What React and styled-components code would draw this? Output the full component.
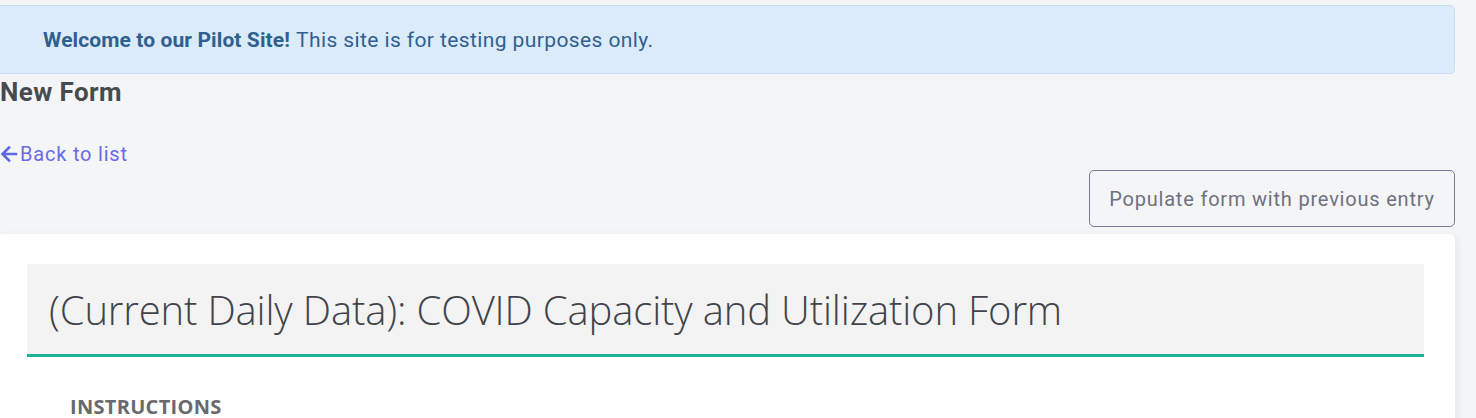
import React from 'react';
import styled, { createGlobalStyle } from 'styled-components';

const GlobalStyle = createGlobalStyle`
    html, body {
        margin: 0;
        padding: 0;
        background: #f4f5f7;
        font-family: Roboto, "Liberation Sans", sans-serif;
        overflow: hidden;
    }
`;

const Page = styled.div`
    width: 1455px;
    padding-top: 5px;
`;

const Banner = styled.div`
    height: 67px;
    display: flex;
    align-items: center;
    padding-left: 43px;
    background: #dbebfa;
    border: 1px solid #c6def6;
    border-left: none;
    border-radius: 0 5px 5px 0;
    color: #30608f;
    font-size: 21px;
    letter-spacing: 0.4px;
    strong {
        font-weight: 700;
        margin-right: 6px;
        letter-spacing: 0.1px;
    }
`;

const Title = styled.h2`
    margin: 0;
    height: 36px;
    line-height: 36px;
    font-size: 26px;
    font-weight: 700;
    letter-spacing: 0.4px;
    color: #484a4e;
`;

const BackLink = styled.a`
    display: flex;
    align-items: center;
    gap: 2px;
    margin-top: 32px;
    height: 24px;
    font-size: 20px;
    letter-spacing: 0.8px;
    color: #6a6be6;
    text-decoration: none;
`;

const Toolbar = styled.div`
    display: flex;
    justify-content: flex-end;
    margin-top: 4px;
`;

const OutlineButton = styled.button`
    height: 57px;
    width: 366px;
    border: 1px solid #7a7b98;
    border-radius: 5px;
    background: transparent;
    color: #6f7180;
    font-family: Roboto, "Liberation Sans", sans-serif;
    font-size: 20px;
    letter-spacing: 0.8px;
    padding: 0;
`;

const Card = styled.div`
    margin-top: 7px;
    background: #fff;
    border-radius: 0 6px 6px 0;
    box-shadow: 2px 2px 8px rgba(0, 0, 0, 0.06);
    padding: 30px 31px 0 27px;
    height: 200px;
`;

const FormHeader = styled.div`
    height: 90px;
    background: #f3f3f3;
    border-bottom: 3px solid #1ab394;
    display: flex;
    align-items: center;
    padding-left: 22px;
`;

const FormTitle = styled.h1`
    margin: 0;
    font-family: "Open Sans", sans-serif;
    font-weight: 300;
    font-size: 40px;
    color: #41444a;
    letter-spacing: -0.15px;
`;

const SectionLabel = styled.div`
    margin-top: 36px;
    padding-left: 43px;
    font-family: "Open Sans", sans-serif;
    font-weight: 700;
    font-size: 20px;
    color: #686a6d;
    letter-spacing: 0.3px;
`;

const ArrowIcon = () => (
    <svg width="18" height="18" viewBox="0 0 18 18" fill="none">
        <path d="M16 9H3M9 2.5L2.5 9L9 15.5" stroke="#5e67e6" strokeWidth="2.6" strokeLinecap="square" />
    </svg>
);

export default function App() {
    return (
        <Page>
            <GlobalStyle />
            <Banner>
                <strong>Welcome to our Pilot Site!</strong> This site is for testing purposes only.
            </Banner>
            <Title>New Form</Title>
            <BackLink href="#">
                <ArrowIcon />
                Back to list
            </BackLink>
            <Toolbar>
                <OutlineButton>Populate form with previous entry</OutlineButton>
            </Toolbar>
            <Card>
                <FormHeader>
                    <FormTitle>(Current Daily Data): COVID Capacity and Utilization Form</FormTitle>
                </FormHeader>
                <SectionLabel>INSTRUCTIONS</SectionLabel>
            </Card>
        </Page>
    );
}
